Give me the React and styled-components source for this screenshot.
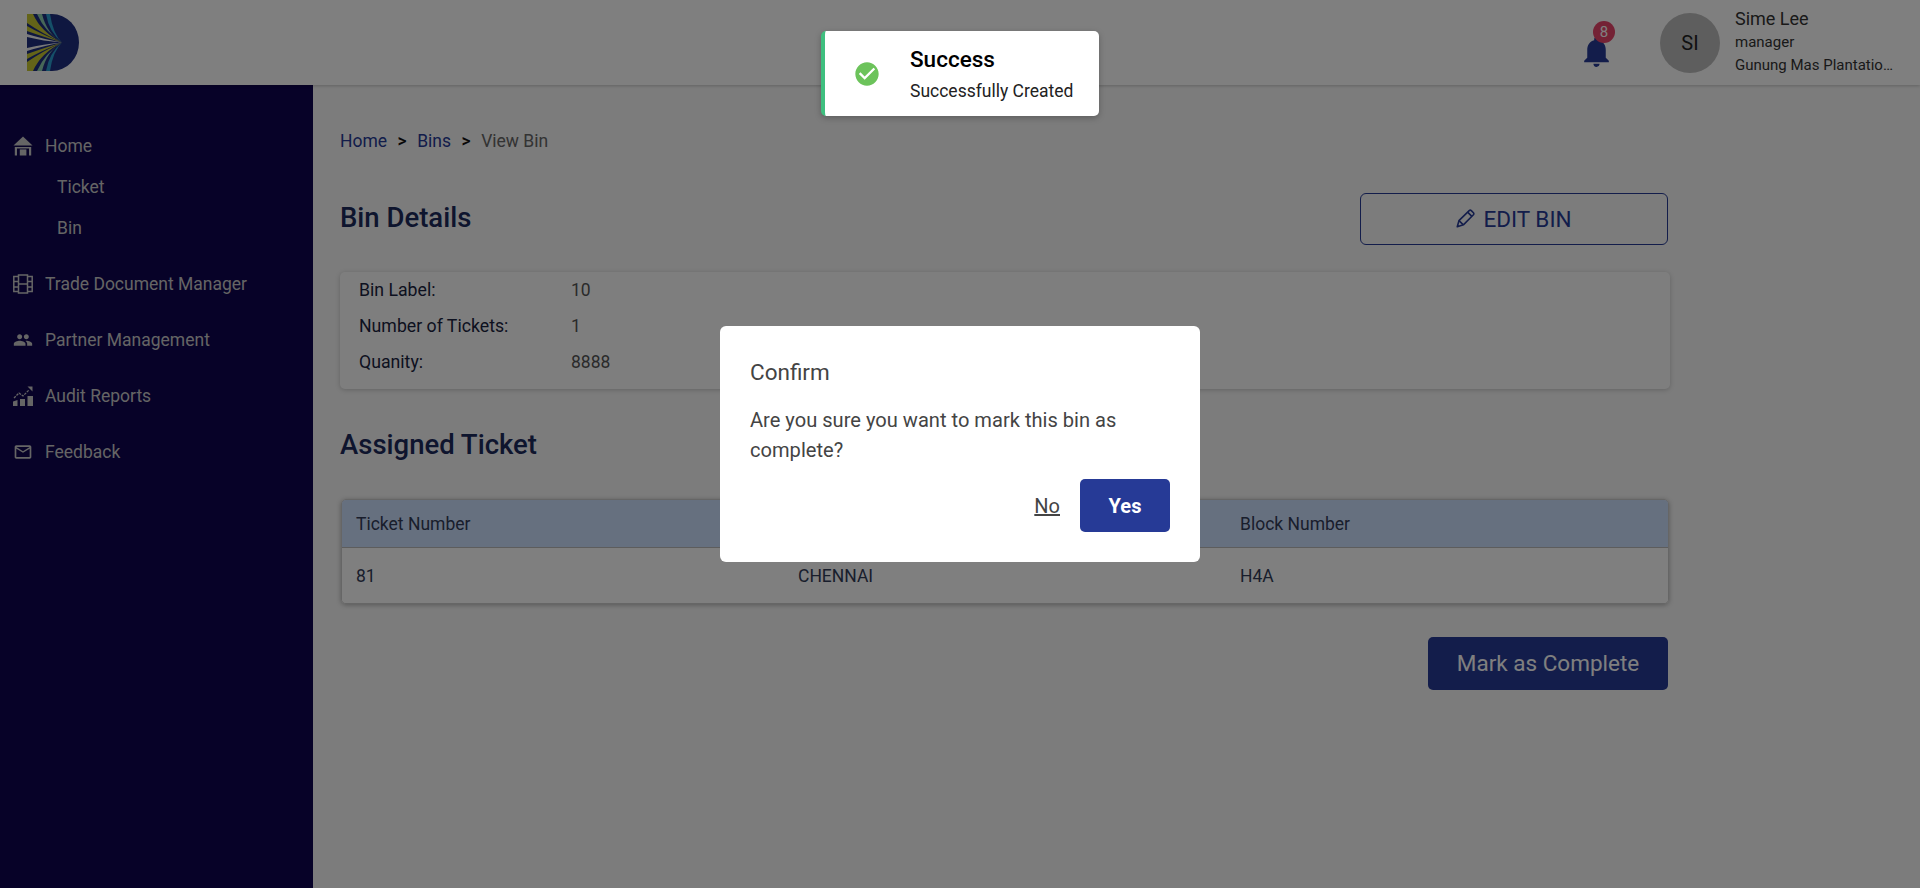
import React from 'react';
import styled, { createGlobalStyle } from 'styled-components';
import { MdNotifications, MdPeople, MdMailOutline, MdCheckCircle } from 'react-icons/md';

const GlobalStyle = createGlobalStyle`
  html, body {
    margin: 0;
    height: 100%;
    overflow: hidden;
    background: #fff;
    font-family: Roboto, "Liberation Sans", sans-serif;
  }
  * { box-sizing: border-box; }
`;

const Page = styled.div`
  position: relative;
  height: 888px;
  display: flex;
  flex-direction: column;
`;

const Header = styled.header`
  height: 85px;
  flex: none;
  background: #fff;
  display: flex;
  align-items: center;
  justify-content: space-between;
  padding: 0 27px;
  box-shadow: 0 1px 3px rgba(0, 0, 0, 0.2);
  z-index: 1;
`;

const UserArea = styled.div`
  display: flex;
  align-items: center;
`;

const BellWrap = styled.div`
  position: relative;
  width: 30px;
  height: 34px;
  margin-right: 49px;
  margin-top: 18px;
  color: #263a96;
  font-size: 37px;
  display: flex;
  align-items: center;
  justify-content: center;
  svg {
    flex: none;
  }
`;

const Badge = styled.span`
  position: absolute;
  top: -14px;
  left: 12px;
  width: 22px;
  height: 22px;
  border-radius: 50%;
  background: #e8446a;
  color: #fff;
  font-size: 15px;
  display: flex;
  align-items: center;
  justify-content: center;
`;

const Avatar = styled.div`
  width: 60px;
  height: 60px;
  border-radius: 50%;
  background: #bdbdbd;
  color: #222;
  font-size: 20px;
  display: flex;
  align-items: center;
  justify-content: center;
  margin-right: 15px;
`;

const UserText = styled.div`
  width: 158px;
  color: #333;
  margin-top: -1px;
`;

const UserName = styled.div`
  font-size: 18px;
  line-height: 24px;
`;

const UserLine = styled.div`
  font-size: 15px;
  line-height: 23px;
  white-space: nowrap;
  overflow: hidden;
  text-overflow: ellipsis;
`;

const Body = styled.div`
  flex: 1;
  display: flex;
  min-height: 0;
`;

const Sidebar = styled.nav`
  width: 313px;
  flex: none;
  background: #0e0450;
  padding-top: 41px;
`;

const NavItem = styled.div`
  display: flex;
  align-items: center;
  height: 40px;
  margin-bottom: ${(p) => p.$gap}px;
  padding-left: ${(p) => (p.$sub ? 57 : 13)}px;
  color: #cacaca;
  font-size: 17.5px;
  svg {
    width: 20px;
    height: 20px;
    margin-right: 12px;
    flex: none;
  }
`;

const Main = styled.main`
  flex: 1;
  background: #f8f8f8;
  padding: 44px 252px 0 27px;
`;

const Crumbs = styled.div`
  display: flex;
  align-items: center;
  height: 24px;
  font-size: 17.5px;
  gap: 10.5px;
`;

const CrumbLink = styled.span`
  color: #263a96;
`;

const CrumbSep = styled.span`
  color: #111;
  font-weight: 500;
`;

const CrumbCurrent = styled.span`
  color: #666;
`;

const TitleRow = styled.div`
  display: flex;
  align-items: center;
  justify-content: space-between;
  margin-top: 40px;
  height: 51px;
`;

const Title = styled.h2`
  margin: 0 0 2px;
  font-size: 27.5px;
  font-weight: 500;
  color: #1c2a5c;
`;

const EditButton = styled.button`
  width: 308px;
  height: 52px;
  border: 1.5px solid #263a96;
  border-radius: 6px;
  background: transparent;
  color: #263a96;
  font: 400 22.5px Roboto, sans-serif;
  display: flex;
  align-items: center;
  justify-content: center;
  gap: 8px;
  svg {
    width: 19px;
    height: 19px;
  }
`;

const DetailCard = styled.section`
  margin-top: 28px;
  margin-right: -2px;
  padding: 0 19px;
  height: 117px;
  border-radius: 5px;
  background: #fdfdfd;
  box-shadow: 0 1px 5px rgba(0, 0, 0, 0.2);
`;

const DetailRow = styled.div`
  display: flex;
  align-items: center;
  height: 36px;
  font-size: 17.5px;
  &:first-child {
    margin-top: 1px;
  }
`;

const DetailLabel = styled.span`
  width: 212px;
  color: #1a2340;
  font-size: 17.7px;
`;

const DetailValue = styled.span`
  color: #555;
`;

const AssignedTitle = styled(Title)`
  margin-top: 39px;
`;

const TicketTable = styled.div`
  margin-top: 38px;
  margin-right: -1px;
  margin-left: 1px;
  border: 1px solid #ccc;
  border-radius: 5px;
  overflow: hidden;
  box-shadow: 0 1px 5px rgba(0, 0, 0, 0.3);
`;

const TableRow = styled.div`
  display: grid;
  grid-template-columns: 442px 442px 1fr;
  align-items: center;
  height: ${(p) => (p.$head ? 48 : 55)}px;
  padding-left: 14px;
  background: ${(p) => (p.$head ? '#cde0ff' : '#fff')};
  border-bottom: ${(p) => (p.$head ? '1px solid #bbb' : 'none')};
  color: #333c58;
  font-size: 17.5px;
`;

const Actions = styled.div`
  display: flex;
  justify-content: flex-end;
  margin-top: 33px;
`;

const CompleteButton = styled.button`
  width: 240px;
  height: 53px;
  border: 0;
  border-radius: 5px;
  padding-bottom: 3px;
  background: #263a96;
  color: #fff;
  font: 400 22.5px Roboto, sans-serif;
`;

const Mask = styled.div`
  position: absolute;
  inset: 0;
  background: rgba(0, 0, 0, 0.5);
  z-index: 5;
`;

const Toast = styled.div`
  position: absolute;
  left: 821px;
  top: 31px;
  width: 278px;
  height: 85px;
  z-index: 7;
  background: #fff;
  border-left: 4px solid #3fbf7f;
  border-radius: 5px;
  box-shadow: 0 2px 6px rgba(0, 0, 0, 0.25);
  display: flex;
  align-items: center;
`;

const ToastIcon = styled.div`
  width: 85px;
  padding-left: 28px;
  color: #6cc35b;
  font-size: 28px;
  display: flex;
`;

const ToastCopy = styled.div`
  margin-top: 2px;
`;

const ToastTitle = styled.div`
  font-size: 22.5px;
  font-weight: 500;
  color: #000;
  line-height: 28px;
`;

const ToastText = styled.div`
  font-size: 17.5px;
  color: #222;
  line-height: 28px;
  margin-top: 4px;
`;

const Dialog = styled.div`
  position: absolute;
  left: 720px;
  top: 326px;
  width: 480px;
  height: 236px;
  z-index: 6;
  background: #fff;
  border-radius: 6px;
  padding: 31px 30px 30px;
  color: #444;
`;

const DialogTitle = styled.div`
  font-size: 22.5px;
  line-height: 30px;
`;

const DialogText = styled.div`
  margin-top: 18px;
  font-size: 20.1px;
  line-height: 30px;
`;

const DialogActions = styled.div`
  display: flex;
  justify-content: flex-end;
  align-items: center;
  gap: 20px;
  margin-top: 14px;
`;

const NoLink = styled.span`
  font-size: 20px;
  color: #444;
  text-decoration: underline;
`;

const YesButton = styled.button`
  width: 90px;
  height: 53px;
  border: 0;
  border-radius: 5px;
  background: #263a96;
  color: #fff;
  font: 700 20px Roboto, sans-serif;
`;

const LogoMark = styled.svg`
  width: 52px;
  height: 57px;
  display: block;
`;

const stripes = [
  { d: 'M0 0H6Q14 18 35 28.5Q16 20 0 9Z', fill: '#c8c832' },
  { d: 'M10 0H15Q20 20 35 28.5Q18 18 10 0Z', fill: '#8fd0b0' },
  { d: 'M19 0H23Q26 20 35 28.5Q22 18 19 0Z', fill: '#2a9fd0' },
  { d: 'M0 12Q14 20 35 28.5Q14 22 0 17Z', fill: '#c8c832' },
  { d: 'M0 20Q16 25 35 28.5Q16 27 0 23Z', fill: '#f4f4f4' },
];

function Logo() {
  return (
    <LogoMark viewBox="0 0 52 57">
      <path d="M0 0H25A27 28.5 0 0 1 25 57H0Z" fill="#1f2f80" />
      {stripes.map((s, i) => (
        <path key={i} d={s.d} fill={s.fill} />
      ))}
      <g transform="matrix(1 0 0 -1 0 57)">
        {stripes.map((s, i) => (
          <path key={i} d={s.d} fill={s.fill} />
        ))}
      </g>
    </LogoMark>
  );
}

function HomeIcon() {
  return (
    <svg viewBox="0 0 20 20" fill="currentColor">
      <path d="M10 0.5 0.5 9.500H19.500Z" />
      <path d="M1.800 11H18.200V19.500H16V12.600H4V19.500H1.800Z" />
      <rect x="6.800" y="13.400" width="6.600" height="6.100" />
    </svg>
  );
}

function FilmIcon() {
  return (
    <svg viewBox="0 0 20 20" fill="none" stroke="currentColor" strokeWidth="1.500">
      <rect x="5.500" y="1" width="9" height="18" />
      <path d="M5.500 10H14.500" />
      <path d="M5.500 2.500H0.800V17.500H5.500M14.500 2.500H19.200V17.500H14.500" />
      <path d="M0.800 7.500H5.500M0.800 13H5.500M14.500 7.500H19.200M14.500 13H19.200" />
    </svg>
  );
}

function AuditIcon() {
  return (
    <svg viewBox="0 0 20 20" fill="currentColor">
      <path d="M0 15.500 4.500 14V20H0ZM7 13H12V20H7ZM14.500 10H20V20H14.500Z" />
      <path d="M1 12 6 7l4 3 6-6" fill="none" stroke="currentColor" strokeWidth="1.300" strokeDasharray="2.500 1" />
      <path d="M14.500 0.500H19.500V5.500Z" />
    </svg>
  );
}

function PencilIcon() {
  return (
    <svg viewBox="0 0 18 18" fill="none" stroke="currentColor" strokeWidth="1.500" strokeLinejoin="round">
      <path d="M1.200 16.800 2.800 11 12.500 1.500Q13.500 0.700 14.500 1.500L16.500 3.500Q17.300 4.500 16.500 5.500L7 15Z" />
      <path d="M2.800 11 7 15M11 3 15 7" />
    </svg>
  );
}

export default function App() {
  return (
    <Page>
      <GlobalStyle />
      <Header>
        <Logo />
        <UserArea>
          <BellWrap>
            <MdNotifications />
            <Badge>8</Badge>
          </BellWrap>
          <Avatar>SI</Avatar>
          <UserText>
            <UserName>Sime Lee</UserName>
            <UserLine>manager</UserLine>
            <UserLine>Gunung Mas Plantation Sdn Bhd</UserLine>
          </UserText>
        </UserArea>
      </Header>
      <Body>
        <Sidebar>
          <NavItem $gap={1}><HomeIcon />Home</NavItem>
          <NavItem $sub $gap={1}>Ticket</NavItem>
          <NavItem $sub $gap={16}>Bin</NavItem>
          <NavItem $gap={16}><FilmIcon />Trade Document Manager</NavItem>
          <NavItem $gap={16}><MdPeople />Partner Management</NavItem>
          <NavItem $gap={16}><AuditIcon />Audit Reports</NavItem>
          <NavItem $gap={16}><MdMailOutline />Feedback</NavItem>
        </Sidebar>
        <Main>
          <Crumbs>
            <CrumbLink>Home</CrumbLink>
            <CrumbSep>&gt;</CrumbSep>
            <CrumbLink>Bins</CrumbLink>
            <CrumbSep>&gt;</CrumbSep>
            <CrumbCurrent>View Bin</CrumbCurrent>
          </Crumbs>
          <TitleRow>
            <Title>Bin Details</Title>
            <EditButton><PencilIcon />EDIT BIN</EditButton>
          </TitleRow>
          <DetailCard>
            <DetailRow><DetailLabel>Bin Label:</DetailLabel><DetailValue>10</DetailValue></DetailRow>
            <DetailRow><DetailLabel>Number of Tickets:</DetailLabel><DetailValue>1</DetailValue></DetailRow>
            <DetailRow><DetailLabel>Quanity:</DetailLabel><DetailValue>8888</DetailValue></DetailRow>
          </DetailCard>
          <AssignedTitle>Assigned Ticket</AssignedTitle>
          <TicketTable>
            <TableRow $head><span>Ticket Number</span><span></span><span>Block Number</span></TableRow>
            <TableRow><span>81</span><span>CHENNAI</span><span>H4A</span></TableRow>
          </TicketTable>
          <Actions>
            <CompleteButton>Mark as Complete</CompleteButton>
          </Actions>
        </Main>
      </Body>
      <Mask />
      <Toast>
        <ToastIcon><MdCheckCircle /></ToastIcon>
        <ToastCopy>
          <ToastTitle>Success</ToastTitle>
          <ToastText>Successfully Created</ToastText>
        </ToastCopy>
      </Toast>
      <Dialog>
        <DialogTitle>Confirm</DialogTitle>
        <DialogText>Are you sure you want to mark this bin as complete?</DialogText>
        <DialogActions>
          <NoLink>No</NoLink>
          <YesButton>Yes</YesButton>
        </DialogActions>
      </Dialog>
    </Page>
  );
}
